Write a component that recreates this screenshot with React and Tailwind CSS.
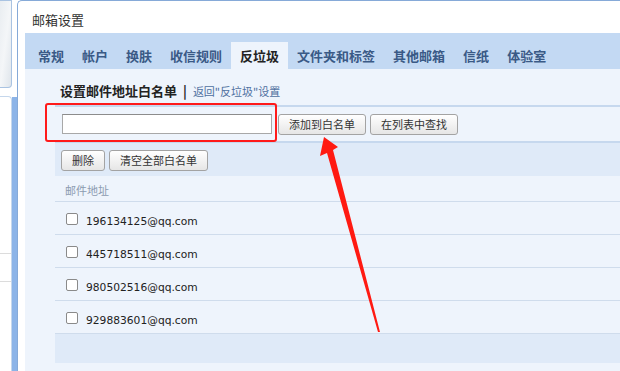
import React from 'react';

const tabs = ['常规', '帐户', '换肤', '收信规则', '反垃圾', '文件夹和标签', '其他邮箱', '信纸', '体验室'];
const emails = ['196134125@qq.com', '445718511@qq.com', '980502516@qq.com', '929883601@qq.com'];

const cjk = { fontFamily: '"Noto Sans CJK SC", "Noto Sans", sans-serif' };
const latin = { fontFamily: '"DejaVu Sans", "Noto Sans CJK SC", sans-serif' };

const Btn = ({ children, className = '' }) => (
  <button
    className={`h-[21px] px-[10px] rounded-[3px] border border-[#a3a3a3] bg-gradient-to-b from-white to-[#e6e6e6] text-[11px] leading-none text-[#333] ${className}`}
    style={cjk}
  >
    {children}
  </button>
);

export default function App() {
  return (
    <div className="relative w-[620px] h-[371px] overflow-hidden bg-white flex" style={cjk}>
      {/* left strip */}
      <div className="w-[12px] flex flex-col">
        <div className="h-[88px] rounded-br-[4px] border border-l-0 border-[#a9c3e2] bg-gradient-to-br from-[#e9edf1] via-[#f4f6f8] to-[#dfe5eb]" />
        <div className="mt-[8px] flex-1 rounded-tr-[4px] border-t border-r border-[#c5d7ec] bg-white">
          <div className="mt-[156px] border-t border-[#dcdcdc]" />
          <div className="mt-[27px] border-t border-[#dcdcdc]" />
        </div>
      </div>
      <div className="w-[5px] flex flex-col">
        <div className="h-[97px]" />
        <div className="flex-1 bg-[#8cb4e8]" />
      </div>

      {/* main panel */}
      <div className="flex-1 flex flex-col rounded-tl-[5px] border-t border-l border-[#86aad8] bg-white">
        <div className="h-[32px] flex items-center pl-[14px] pt-[5px] text-[13px] text-[#333]">邮箱设置</div>
        <div className="flex-1 flex flex-col ml-[7px]">
          {/* tabs */}
          <div className="h-[36px] bg-[#c3d9f3] flex items-end pl-[4px]">
            {tabs.map((t) => (
              <div
                key={t}
                className={`h-[27px] px-[9px] flex items-center text-[13px] font-bold ${
                  t === '反垃圾' ? 'bg-[#eef4fc] text-[#222]' : 'text-[#3a5a86]'
                }`}
              >
                {t}
              </div>
            ))}
          </div>

          {/* content */}
          <div className="flex-1 bg-[#eef4fc] pl-[30px]">
            <div className="h-[36px] flex items-center pl-[5px] pt-[8px]">
              <span className="text-[13px] font-bold text-[#222]">设置邮件地址白名单</span>
              <span className="mx-[6px] text-[13px] font-bold text-[#222]">|</span>
              <span className="text-[11px] text-[#4f70a0]">返回"反垃圾"设置</span>
            </div>
            <div className="h-[38px] border-t-2 border-b-2 border-[#c6d8ee] flex items-center pl-[7px]">
              <div className="w-[210px] h-[20px] border border-[#a8a8a8] border-t-[#8c8c8c] bg-white" />
              <Btn className="ml-[6px]">添加到白名单</Btn>
              <Btn className="ml-[4px]">在列表中查找</Btn>
            </div>
            <div className="h-[33px] bg-[#dfeaf8] flex items-center pl-[6px] pt-[1px]">
              <Btn>删除</Btn>
              <Btn className="ml-[4px]">清空全部白名单</Btn>
            </div>
            <div className="h-[26px] border-b border-[#cfdcec] flex items-center pl-[10px] pt-[3px] text-[11px] text-[#8c9bb0]">
              邮件地址
            </div>
            {emails.map((e) => (
              <div key={e} className="h-[33px] border-b border-[#cfdcec] flex items-center pl-[11px] pt-[2px]">
                <div className="w-[12px] h-[12px] rounded-[2px] border border-[#8a8a8a] bg-white" />
                <span className="ml-[8px] pt-[6px] text-[10.7px] text-[#222]" style={latin}>
                  {e}
                </span>
              </div>
            ))}
            <div className="h-[29px] bg-[#dfeaf8]" />
          </div>
        </div>
      </div>

      {/* red highlight box */}
      <div className="absolute left-[45px] top-[103px] w-[232px] h-[39px] rounded-[3px] border-[2.5px] border-[#ff1a1a]" />

      {/* red arrow */}
      <svg className="absolute left-0 top-0" width="620" height="371" viewBox="0 0 620 371">
        <polygon
          points="324,137 338,147 333,150 380,332 378,332 327,153 320,156"
          fill="#ff1a12"
        />
      </svg>
    </div>
  );
}
